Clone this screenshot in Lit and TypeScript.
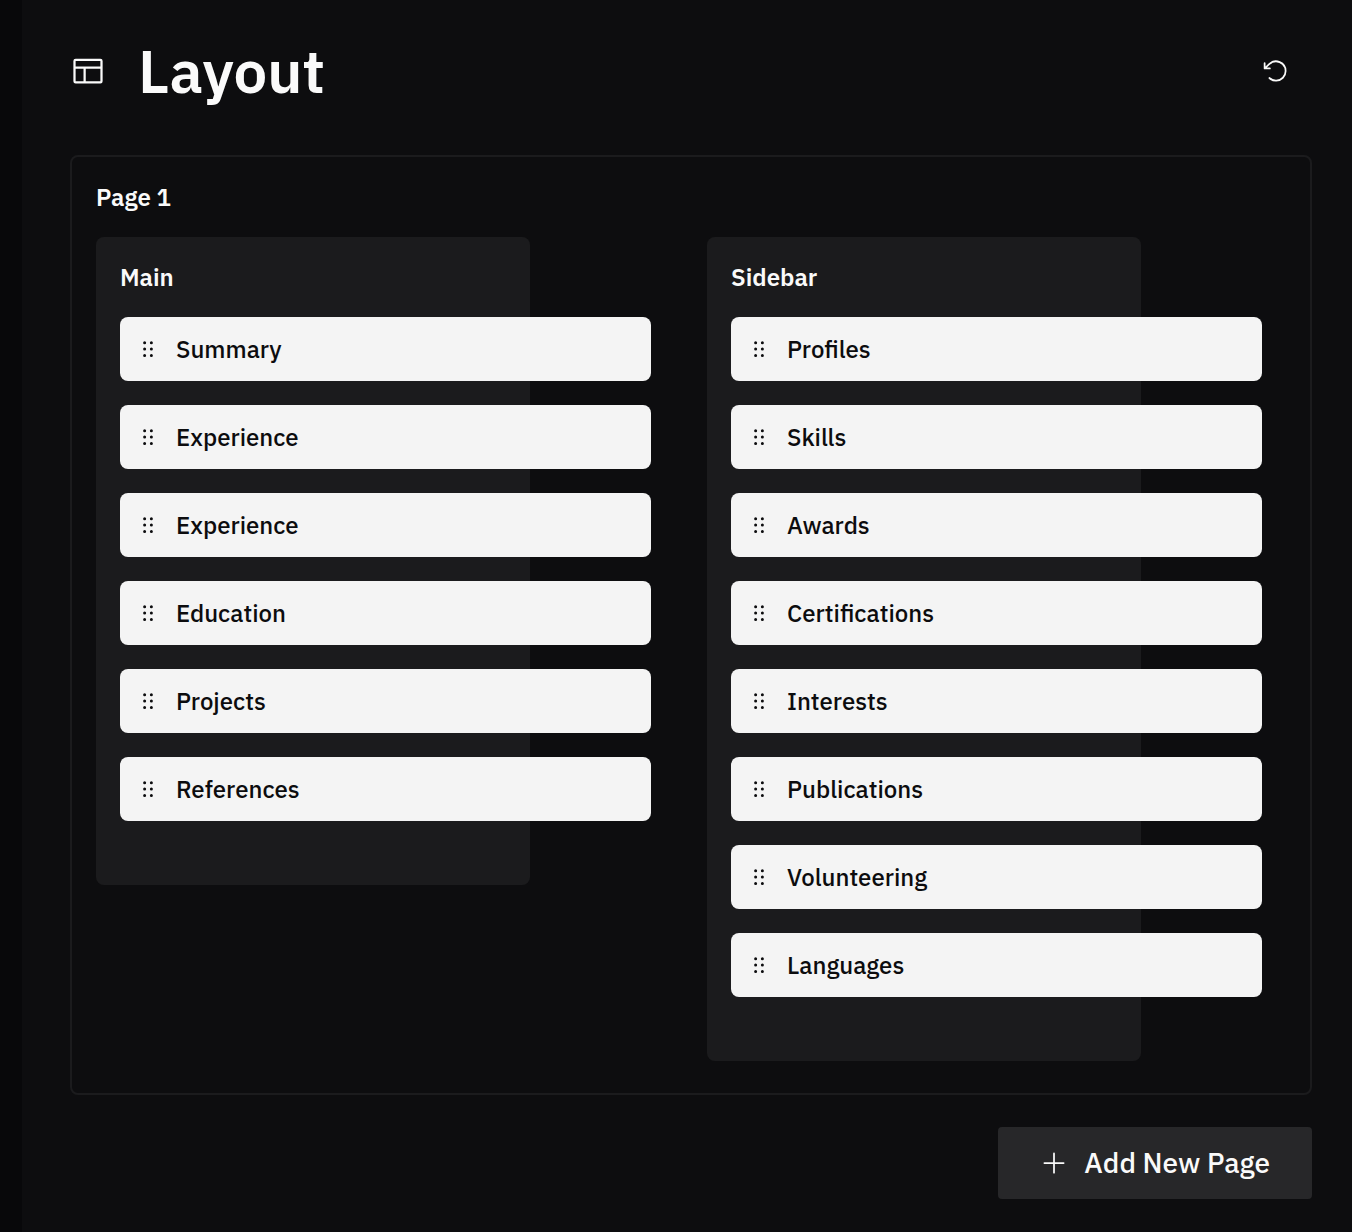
import { LitElement, html, svg, css } from "lit";
import { customElement, property, state } from "lit/decorators.js";

interface Column {
  title: string;
  sections: string[];
}

const icon = (name: string, path: string) => html`
  <svg class="icon ${name}" viewBox="0 0 256 256" fill="currentColor" aria-hidden="true">
    ${svg`<path d=${path}></path>`}
  </svg>
`;

const ICONS = {
  layout:
    "M216,40H40A16,16,0,0,0,24,56V200a16,16,0,0,0,16,16H216a16,16,0,0,0,16-16V56A16,16,0,0,0,216,40Zm0,16V96H40V56ZM40,112H96v88H40Zm176,88H112V112H216v88Z",
  reset:
    "M224,128a96,96,0,0,1-94.71,96H128A95.38,95.38,0,0,1,62.1,197.8a8,8,0,0,1,11-11.63A80,80,0,1,0,71.43,71.39a3.07,3.07,0,0,1-.26.25L44.59,96H72a8,8,0,0,1,0,16H24a8,8,0,0,1-8-8V56a8,8,0,0,1,16,0V85.8L60.25,60A96,96,0,0,1,224,128Z",
  plus:
    "M224,128a8,8,0,0,1-8,8H136v80a8,8,0,0,1-16,0V136H40a8,8,0,0,1,0-16h80V40a8,8,0,0,1,16,0v80h80A8,8,0,0,1,224,128Z",
  dots:
    "M108,60A16,16,0,1,1,92,44,16,16,0,0,1,108,60Zm56,16a16,16,0,1,0-16-16A16,16,0,0,0,164,76ZM92,112a16,16,0,1,0,16,16A16,16,0,0,0,92,112Zm72,0a16,16,0,1,0,16,16A16,16,0,0,0,164,112ZM92,180a16,16,0,1,0,16,16A16,16,0,0,0,92,180Zm72,0a16,16,0,1,0,16,16A16,16,0,0,0,164,180Z",
};

@customElement("layout-column")
export class LayoutColumn extends LitElement {
  @property() heading = "";
  @property({ attribute: false }) sections: string[] = [];

  static styles = css`
    :host {
      display: block;
    }
    .column {
      position: relative;
      isolation: isolate;
      padding: 24px 24px 64px;
    }
    /* The panel is narrower than the rows, which run out over its right edge. */
    .column::before {
      content: "";
      position: absolute;
      inset: 0 25% 0 0;
      z-index: -1;
      border-radius: 8px;
      background: #1b1b1d;
    }
    .heading {
      margin: 0 0 24px;
      font-size: 24px;
      line-height: 32px;
      font-weight: 600;
    }
    .list {
      display: flex;
      flex-direction: column;
      gap: 24px;
      margin: 0;
      padding: 0;
      list-style: none;
    }
    .item {
      display: flex;
      align-items: center;
      gap: 16px;
      padding: 16px;
      border-radius: 8px;
      background: #f4f4f4;
      color: #0c0c0e;
      font-size: 24px;
      line-height: 32px;
      font-weight: 500;
      cursor: grab;
    }
    .icon {
      display: block;
      flex: none;
      width: 24px;
      height: 24px;
    }
  `;

  render() {
    return html`
      <section class="column">
        <h3 class="heading">${this.heading}</h3>
        <ul class="list">
          ${this.sections.map((s) => html`<li class="item">${icon("dots", ICONS.dots)}<span>${s}</span></li>`)}
        </ul>
      </section>
    `;
  }
}

@customElement("app-root")
export class AppRoot extends LitElement {
  @state() private columns: Column[] = [
    { title: "Main", sections: ["Summary", "Experience", "Experience", "Education", "Projects", "References"] },
    {
      title: "Sidebar",
      sections: [
        "Profiles",
        "Skills",
        "Awards",
        "Certifications",
        "Interests",
        "Publications",
        "Volunteering",
        "Languages",
      ],
    },
  ];

  static styles = css`
    :host {
      display: block;
      box-sizing: border-box;
      min-height: 100vh;
      border-left: 22px solid #08080a;
      background: #0d0d0f;
      color: #fafafa;
      font-family: "IBM Plex Sans", "Noto Sans", sans-serif;
    }
    .panel {
      display: flex;
      flex-direction: column;
      gap: 32px;
      padding: 19px 40px 32px 48px;
    }
    .header {
      display: flex;
      align-items: center;
      justify-content: space-between;
      height: 104px;
    }
    .title-group {
      display: flex;
      align-items: center;
      gap: 32px;
    }
    .title {
      margin: 0;
      font-size: 60px;
      line-height: 60px;
      font-weight: 600;
    }
    .icon {
      display: block;
      flex: none;
      width: 28px;
      height: 28px;
    }
    .icon.layout {
      width: 36px;
      height: 36px;
    }
    button {
      display: flex;
      align-items: center;
      justify-content: center;
      height: 72px;
      border: 0;
      border-radius: 4px;
      background: none;
      color: inherit;
      font: inherit;
      cursor: pointer;
    }
    .reset {
      width: 72px;
      padding: 0;
    }
    .page {
      padding: 24px 24px 32px;
      border: 2px solid #1b1b1d;
      border-radius: 8px;
    }
    .page-title {
      margin: 0 0 24px;
      font-size: 24px;
      line-height: 32px;
      font-weight: 600;
    }
    .columns {
      display: grid;
      grid-template-columns: repeat(2, minmax(0, 1fr));
      align-items: start;
      gap: 32px;
    }
    .add {
      align-self: flex-end;
      gap: 16px;
      padding: 0 42px;
      background: #272729;
      font-size: 28px;
      line-height: 40px;
      font-weight: 500;
    }
  `;

  render() {
    return html`
      <main class="panel">
        <header class="header">
          <div class="title-group">
            ${icon("layout", ICONS.layout)}
            <h1 class="title">Layout</h1>
          </div>
          <button class="reset" type="button" aria-label="Reset layout">${icon("undo", ICONS.reset)}</button>
        </header>
        <section class="page">
          <h2 class="page-title">Page 1</h2>
          <div class="columns">
            ${this.columns.map(
              (c) => html`<layout-column .heading=${c.title} .sections=${c.sections}></layout-column>`,
            )}
          </div>
        </section>
        <button class="add" type="button">${icon("plus", ICONS.plus)}<span>Add New Page</span></button>
      </main>
    `;
  }
}
